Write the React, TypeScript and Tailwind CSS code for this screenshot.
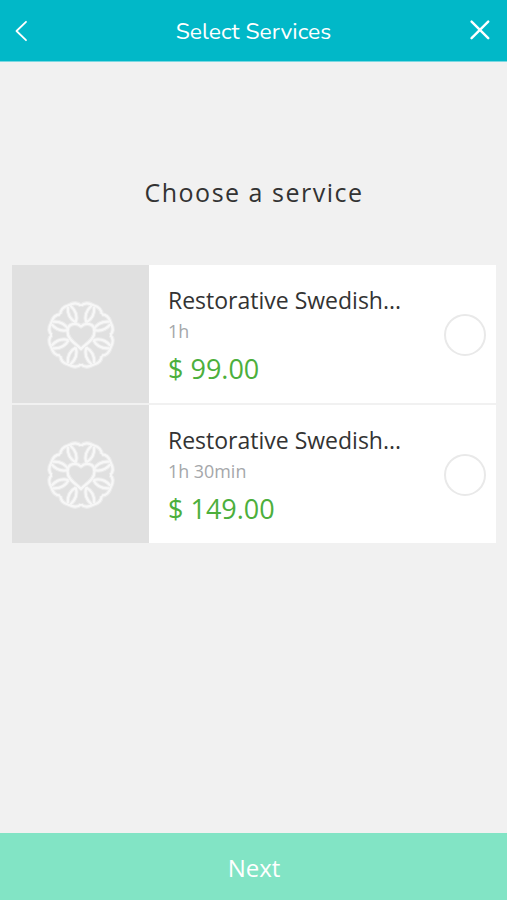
import React, { useState } from 'react';

interface Service {
    id: number;
    name: string;
    duration: string;
    price: string;
}

const services: Service[] = [
    { id: 1, name: 'Restorative Swedish...', duration: '1h', price: '$ 99.00' },
    { id: 2, name: 'Restorative Swedish...', duration: '1h 30min', price: '$ 149.00' },
];

const petalAngles = [22.5, 67.5, 112.5, 157.5, 202.5, 247.5, 292.5, 337.5];

const FlowerLogo: React.FC = () => {
    const shapes = (
        <>
            {petalAngles.map(angle => (
                <g key={angle} transform={`rotate(${angle})`}>
                    <path d="M-11.2 -27C-9.5 -31 -5 -32.8 0 -32.2C5 -32.8 9.5 -31 11.2 -27" />
                    <path d="M0 -13.5C-4.4 -19 -4.4 -25 -1.5 -31M0 -13.5C4.4 -19 4.4 -25 1.5 -31" />
                </g>
            ))}
            <path d="M0 14C-3.5 9.5 -13.5 5.5 -13.5 -3.5C-13.5 -12.5 -4 -12.5 0 -8.5C4 -12.5 13.5 -12.5 13.5 -3.5C13.5 5.5 3.5 9.5 0 14Z" />
        </>
    );

    return (
        <svg width="76" height="76" viewBox="-38 -38 76 76" fill="none" stroke="#fff" strokeLinejoin="round">
            <g strokeWidth="4.2" opacity="0.35">{shapes}</g>
            <g strokeWidth="2.2" opacity="0.65">{shapes}</g>
        </svg>
    );
};

const App: React.FC = () => {
    const [selected, setSelected] = useState<number | null>(null);

    return (
        <div className="flex h-screen flex-col overflow-hidden bg-[#f1f1f1] font-['Open_Sans','Noto_Sans',sans-serif] text-[#333]">
            {/* Header */}
            <header className="flex h-[62px] shrink-0 items-center justify-between border-b border-[#7bd8e1] bg-[#01b8c8] px-4 text-white">
                <button aria-label="Back" className="w-5">
                    <svg width="14" height="22" viewBox="0 0 14 22" fill="none" stroke="currentColor" strokeWidth="1.8" strokeLinecap="round" strokeLinejoin="round" className="-ml-0.5">
                        <path d="M12 1.8L2.5 11L12 20.2" />
                    </svg>
                </button>
                <h1 className="pt-[2px] font-['Nunito','Open_Sans',sans-serif] text-[22.9px] leading-[30px]">Select Services</h1>
                <button aria-label="Close" className="w-5">
                    <svg width="20" height="20" viewBox="0 0 20 20" fill="none" stroke="currentColor" strokeWidth="2.4" strokeLinecap="round" className="-mt-0.5 -ml-px">
                        <path d="M1.6 1.6L18.2 18.2M18.2 1.6L1.6 18.2" />
                    </svg>
                </button>
            </header>

            <main className="flex-1 pl-3 pr-[11px]">
                <h2 className="mt-[112px] text-center text-[25px] leading-9 tracking-[1.5px]">Choose a service</h2>

                {/* Service list */}
                <div className="mt-[55px] flex flex-col gap-[2px]">
                    {services.map(service => (
                        <div
                            key={service.id}
                            className="flex h-[138px] cursor-pointer items-center bg-white pr-[10.5px]"
                            onClick={() => setSelected(service.id)}
                        >
                            <div className="flex h-full w-[137px] items-center justify-center bg-[#e0e0e0] pt-[2px]">
                                <FlowerLogo />
                            </div>
                            <div className="flex-1 pl-[19px] pt-[8px]">
                                <p className="text-[23px] leading-[31px]">{service.name}</p>
                                <p className="text-[17.9px] leading-[31px] text-[#a5a7aa]">{service.duration}</p>
                                <p className="text-[27px] leading-[44px] text-[#4caf3c]">{service.price}</p>
                            </div>
                            <span className={`mt-px size-[42px] rounded-full border-2 border-[#e9e9e9] ${selected === service.id ? 'bg-[#01b8c8]' : 'bg-white'}`} />
                        </div>
                    ))}
                </div>
            </main>

            {/* Next */}
            <button className="h-[67px] shrink-0 bg-[#82e4c5] pt-[2px] pl-px text-[24px] text-white">Next</button>
        </div>
    );
};

export default App;
